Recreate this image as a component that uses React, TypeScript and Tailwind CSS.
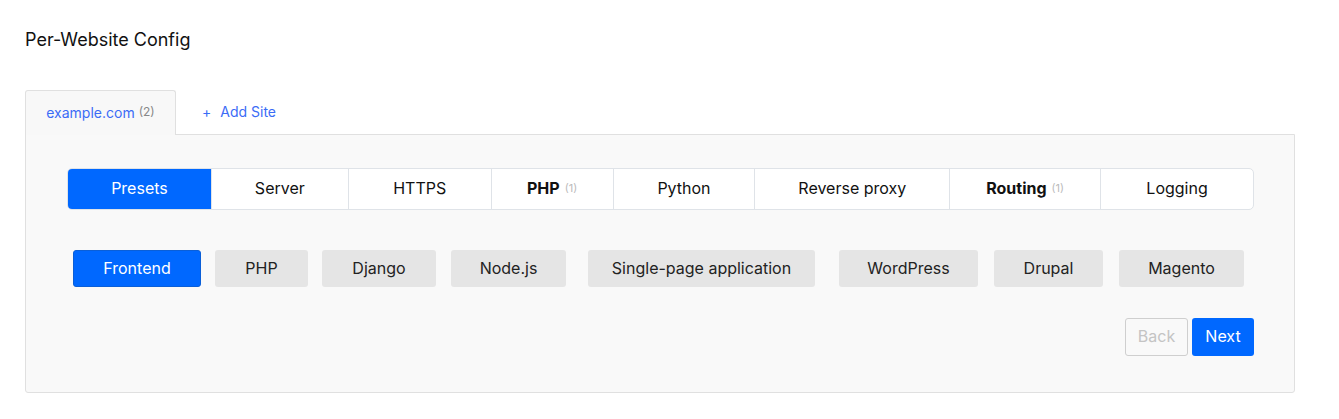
import React from 'react';

const sections = [
  { label: 'Presets', w: 143, active: true },
  { label: 'Server', w: 137 },
  { label: 'HTTPS', w: 143 },
  { label: 'PHP', w: 122, bold: true, count: 1 },
  { label: 'Python', w: 142 },
  { label: 'Reverse proxy', w: 195 },
  { label: 'Routing', w: 151, bold: true, count: 1 },
  { label: 'Logging', w: 153 },
];

const presets = [
  { label: 'Frontend', w: 128, ml: 6, active: true },
  { label: 'PHP', w: 93, ml: 14 },
  { label: 'Django', w: 114, ml: 14 },
  { label: 'Node.js', w: 115, ml: 15 },
  { label: 'Single-page application', w: 227, ml: 22 },
  { label: 'WordPress', w: 139, ml: 24 },
  { label: 'Drupal', w: 109, ml: 16 },
  { label: 'Magento', w: 125, ml: 16 },
];

export default function App() {
  return (
    <div className="min-h-[419px] bg-white px-[25px] pt-[29px] text-[#111] [font-family:Inter,'Liberation_Sans',sans-serif]">
      <h2 className="text-[18px] leading-[22px]">Per-Website Config</h2>

      {/* site tabs */}
      <div className="mt-[39px] flex items-end">
        <div className="relative z-10 -mb-px flex h-[45px] w-[151px] items-center justify-center rounded-t-[3px] border border-b-0 border-[#e0e0e0] bg-[#f8f8f8] pb-[2px] text-[14px] text-[#3b6cf6]">
          example.com<span className="ml-1 text-[12px] text-[#888]">(2)</span>
        </div>
        <div className="flex h-[44px] items-center pb-[2px] pl-[26px] text-[14px] text-[#3b6cf6]">
          <span className="mr-[9px]">+</span>Add Site
        </div>
      </div>

      {/* panel */}
      <div className="w-[1270px] rounded-b-[3px] border border-[#e0e0e0] bg-[#f9f9f9] pb-[36px] pl-[41px] pr-[40px] pt-[33px]">
        <div className="flex h-[42px] overflow-hidden rounded-[5px] border border-[#dfe3e8] bg-white">
          {sections.map((s, i) => (
            <div
              key={s.label}
              style={{ width: s.w }}
              className={
                'flex items-center justify-center pb-[2px] text-[16px] ' +
                (i > 0 ? 'border-l border-[#dfe3e8] ' : '') +
                (s.active ? 'bg-[#0068ff] text-white' : 'text-[#111]') +
                (s.bold ? ' font-bold' : '')
              }
            >
              {s.label}
              {s.count && <span className="ml-[5px] text-[11px] font-normal text-[#bbb]">({s.count})</span>}
            </div>
          ))}
        </div>

        <div className="mt-[40px] flex">
          {presets.map((p) => (
            <div
              key={p.label}
              style={{ width: p.w, marginLeft: p.ml }}
              className={
                'flex h-[37px] items-center justify-center rounded-[3px] pb-[2px] text-[16px] ' +
                (p.active ? 'border border-[#0a5fd8] bg-[#0068ff] text-white' : 'bg-[#e5e5e5] text-[#222]')
              }
            >
              {p.label}
            </div>
          ))}
        </div>

        <div className="mt-[31px] flex justify-end gap-[4px]">
          <button className="h-[38px] w-[63px] rounded-[3px] border border-[#cfcfcf] pb-[2px] text-[16px] text-[#c4c4c4]">Back</button>
          <button className="h-[38px] w-[62px] rounded-[3px] bg-[#0068ff] pb-[2px] text-[16px] text-white">Next</button>
        </div>
      </div>
    </div>
  );
}
